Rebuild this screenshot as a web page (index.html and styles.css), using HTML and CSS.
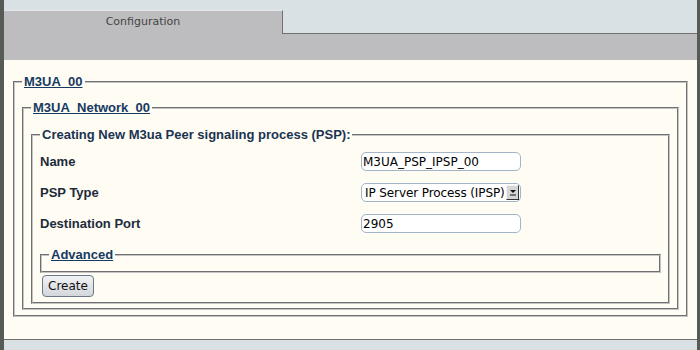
FILE: index.html
```html
<!DOCTYPE html>
<html>
<head>
<meta charset="utf-8">
<link rel="stylesheet" href="styles.css">
</head>
<body>
<div class="frame">
  <div class="tabs">
    <div class="tab">Configuration</div>
    <div class="tab-fill"></div>
  </div>
  <div class="bar"></div>
  <div class="content">
    <fieldset class="fs">
      <legend>M3UA_00</legend>
      <fieldset class="fs">
        <legend>M3UA_Network_00</legend>
        <fieldset class="fs inner">
          <legend>Creating New M3ua Peer signaling process (PSP):</legend>
          <div class="form">
            <label class="lbl">Name</label>
            <input class="field" type="text" value="M3UA_PSP_IPSP_00">
            <label class="lbl">PSP Type</label>
            <div class="selectbox">
              <select class="sel">
                <option>IP Server Process (IPSP)</option>
              </select>
              <span class="selbtn"><svg width="8" height="7" viewBox="0 0 8 7"><path d="M1 1h6L4 4z" fill="#111"/><path d="M1 6h6" stroke="#111" stroke-width="1"/></svg></span>
            </div>
            <label class="lbl">Destination Port</label>
            <input class="field" type="text" value="2905">
          </div>
          <fieldset class="adv"><legend>Advanced</legend></fieldset>
          <button class="btn">Create</button>
        </fieldset>
      </fieldset>
    </fieldset>
  </div>
</div>
</body>
</html>
```
FILE: styles.css
```css
html, body {
  margin: 0;
  padding: 0;
}
body {
  background: #d9e1e5;
  font-family: "Liberation Sans", Arial, sans-serif;
}
.frame {
  box-sizing: border-box;
  height: 350px;
  border-left: 4px solid #575b55;
  border-right: 3px solid #575b55;
  background: #d9e1e5;
}
.tabs {
  display: flex;
  height: 34px;
}
.tab {
  box-sizing: border-box;
  margin-top: 10px;
  width: 279px;
  height: 24px;
  background: #bdbdbf;
  border-top: 1px solid #e6e9eb;
  border-right: 1px solid #6f7070;
  font-family: "DejaVu Sans", sans-serif;
  font-size: 11px;
  color: #444;
  text-align: center;
  line-height: 22px;
}
.tab-fill {
  flex: 1;
  border-bottom: 1px solid #6f7070;
}
.bar {
  height: 26px;
  background: #bdbdbf;
}
.content {
  background: #fffcf3;
  padding: 14px 9px 22px 9px;
  border-bottom: 1px solid #707270;
}
.fs {
  margin: 0;
  min-width: 0;
  padding: 11px 7px 5px 7px;
  border: 2px groove #c4c4c4;
}
.fs .fs {
  padding-top: 12px;
  padding-bottom: 4px;
}
.fs .fs .inner {
  padding-top: 4px;
  padding-bottom: 5px;
}
legend {
  padding: 0 2px;
  font-size: 13px;
  line-height: 15px;
  font-weight: bold;
  color: #153a62;
  text-decoration: underline;
}
.inner > legend {
  text-decoration: none;
  color: #1a3352;
}
.form {
  display: grid;
  grid-template-columns: 321px 160px;
  grid-auto-rows: 31px;
  align-items: center;
}
.lbl {
  font-size: 13px;
  font-weight: bold;
  color: #1d2b3b;
}
.field {
  box-sizing: border-box;
  width: 160px;
  height: 19px;
  margin: 0;
  padding: 0 1px;
  border: 1px solid #a3b4c6;
  border-radius: 5px;
  background: #fff;
  font-family: "DejaVu Sans", sans-serif;
  font-size: 12px;
  color: #000;
  outline: none;
}
.selectbox {
  box-sizing: border-box;
  width: 160px;
  height: 19px;
  display: flex;
  align-items: center;
  border: 1px solid #a3b4c6;
  border-radius: 5px;
  background: #fff;
  padding-right: 1px;
}
.sel {
  flex: 1;
  min-width: 0;
  appearance: none;
  -webkit-appearance: none;
  border: none;
  background: transparent;
  margin: 0;
  padding: 0 0 0 3px;
  font-family: "DejaVu Sans", sans-serif;
  font-size: 12px;
  letter-spacing: -0.1px;
  color: #000;
  outline: none;
}
.selbtn {
  box-sizing: border-box;
  flex: none;
  width: 13px;
  height: 15px;
  display: flex;
  align-items: center;
  justify-content: center;
  background: #d6d6d6;
  border-top: 1px solid #f4f4f4;
  border-left: 1px solid #f4f4f4;
  border-right: 1px solid #333;
  border-bottom: 1px solid #333;
}
.adv {
  margin: 8px 0 0 0;
  min-width: 0;
  padding: 0 7px 9px 7px;
  border: 2px groove #c4c4c4;
}
.btn {
  display: block;
  box-sizing: border-box;
  margin: 2px 0 0 2px;
  width: 52px;
  height: 22px;
  padding: 0;
  border: 1px solid #6a7887;
  border-radius: 4px;
  background: linear-gradient(#f1f2f4, #d3d7db);
  font-family: "DejaVu Sans", sans-serif;
  font-size: 12px;
  color: #111;
}
```
